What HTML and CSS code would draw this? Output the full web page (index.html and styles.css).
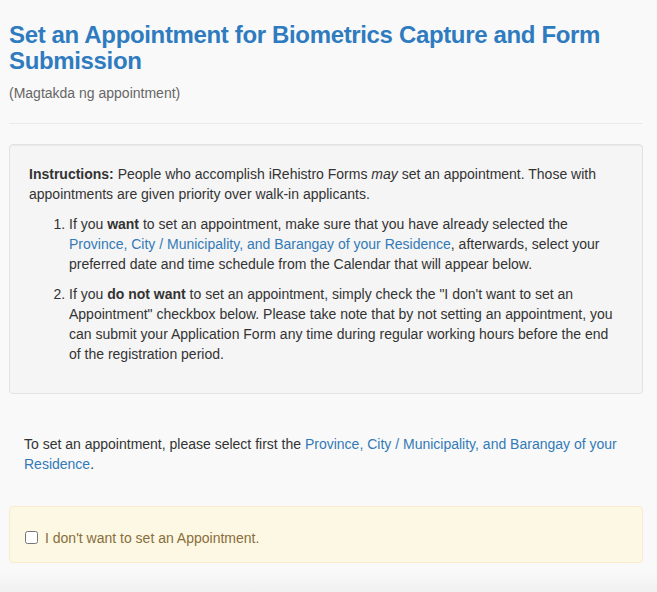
FILE: index.html
```html
<!DOCTYPE html>
<html lang="en">
<head>
<meta charset="utf-8">
<title>Set an Appointment</title>
<link rel="stylesheet" href="styles.css">
</head>
<body>
<div class="page">
  <h3 class="title">Set an Appointment for Biometrics Capture and Form Submission</h3>
  <p class="subtitle">(Magtakda ng appointment)</p>
  <hr class="divider">
  <div class="well">
    <p class="lead-text"><strong>Instructions:</strong> People who accomplish iRehistro Forms <em>may</em> set an appointment. Those with appointments are given priority over walk-in applicants.</p>
    <ol class="steps">
      <li>If you <strong>want</strong> to set an appointment, make sure that you have already selected the <a href="#">Province, City / Municipality, and Barangay of your Residence</a>, afterwards, select your preferred date and time schedule from the Calendar that will appear below.</li>
      <li>If you <strong>do not want</strong> to set an appointment, simply check the "I don't want to set an Appointment" checkbox below. Please take note that by not setting an appointment, you can submit your Application Form any time during regular working hours before the end of the registration period.</li>
    </ol>
  </div>
  <p class="notice">To set an appointment, please select first the <a href="#">Province, City / Municipality, and Barangay of your Residence</a>.</p>
  <div class="alert">
    <label class="check"><input type="checkbox" class="check-box"><span>I don't want to set an Appointment.</span></label>
  </div>
  <div class="shade"></div>
</div>
</body>
</html>
```

FILE: styles.css
```css
html, body {
  margin: 0;
  padding: 0;
  background: #f9f9f9;
}
body {
  font-family: "Liberation Sans", Arial, sans-serif;
  font-size: 14px;
  line-height: 20px;
  color: #333;
  overflow: hidden;
}
.page {
  padding: 0 14px 0 9px;
}
.title {
  margin: 22px 0 0;
  font-size: 24px;
  line-height: 26.4px;
  font-weight: bold;
  letter-spacing: -0.35px;
  color: #2f7bbf;
}
.subtitle {
  margin: 8px 0 0;
  color: #666;
}
.divider {
  margin: 20px 0 20px;
  border: 0;
  border-top: 1px solid #ebebeb;
  height: 0;
}
.well {
  background: #f5f5f5;
  border: 1px solid #e3e3e3;
  border-radius: 4px;
  box-shadow: inset 0 1px 1px rgba(0,0,0,0.05);
  padding: 19px;
  box-sizing: border-box;
  height: 250px;
}
.lead-text {
  margin: 0 0 10px;
}
.steps {
  margin: 0;
  padding-left: 40px;
}
.steps li {
  margin-bottom: 10px;
}
a {
  color: #337ab7;
  text-decoration: none;
}
.notice {
  margin: 40px 0 0;
  padding-left: 15px;
}
.alert {
  margin-top: 32px;
  background: #fcf8e3;
  border: 1px solid #faebcc;
  border-radius: 4px;
  color: #8a6d3b;
  padding: 21px 15px 14px;
}
.check {
  display: flex;
  align-items: center;
  gap: 7px;
}
.check-box {
  margin: 0;
  width: 13px;
  height: 13px;
}
.shade {
  height: 30px;
  margin: 8px -14px 0 -9px;
  background: linear-gradient(#f9f9f9, #ededed);
}
```
